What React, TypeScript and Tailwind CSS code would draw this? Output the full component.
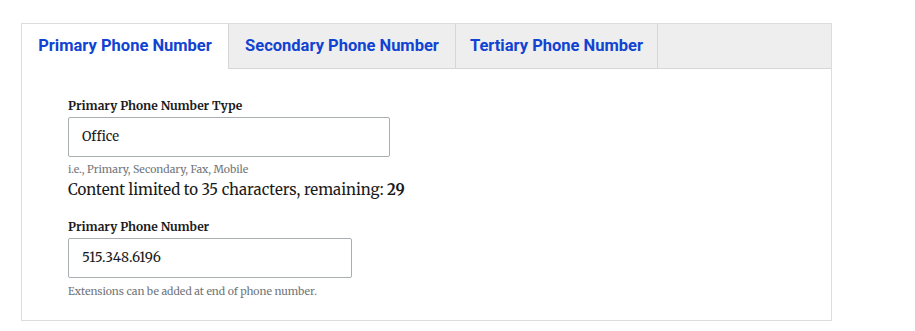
const serif = "font-['Merriweather','DejaVu_Serif',serif]"

const tabs = ['Primary Phone Number', 'Secondary Phone Number', 'Tertiary Phone Number']

export default function App() {
  return (
    <div className="h-[331px] w-[915px] overflow-hidden bg-white">
      <div className="h-[23px]" />
      <div className="ml-[21px] w-[811px] border border-[#dcdcdc]">
        {/* tab strip */}
        <div className="flex h-[45px] bg-[#eeeeee]">
          {tabs.map((t, i) => (
            <div
              key={t}
              className={
                i === 0
                  ? "flex w-[206px] items-center justify-center bg-white font-['Roboto',sans-serif] text-[16.5px] font-bold text-[#1143d2]"
                  : i === 1
                    ? "flex w-[227px] items-center justify-center border-b border-l border-[#d6d6d6] font-['Roboto',sans-serif] text-[16.5px] font-bold text-[#1143d2]"
                    : "flex w-[203px] items-center justify-center border-b border-x border-[#d6d6d6] font-['Roboto',sans-serif] text-[16.5px] font-bold text-[#1143d2]"
              }
            >
              {t}
            </div>
          ))}
          <div className="flex-1 border-b border-[#d6d6d6]" />
        </div>

        {/* panel */}
        <div className={`px-[46px] pt-[29px] pb-[22px] text-[#1b1b1b] ${serif}`}>
          <label className="block text-[12px] font-bold leading-[16px]">Primary Phone Number Type</label>
          <div className="mt-[3px] flex h-[40px] w-[322px] items-center rounded-[2px] border border-[#a9aeb1] px-[13px] text-[13px]">
            Office
          </div>
          <p className="mt-[6px] text-[10.5px] leading-[13px] text-[#71767a]">i.e., Primary, Secondary, Fax, Mobile</p>
          <p className="mt-[4px] text-[15px] leading-[20px] text-[#1b1b1b]">
            Content limited to 35 characters, remaining: <b>29</b>
          </p>

          <label className="mt-[19px] block text-[12px] font-bold leading-[16px]">Primary Phone Number</label>
          <div className="mt-[3px] flex h-[40px] w-[284px] items-center rounded-[2px] border border-[#a9aeb1] px-[13px] text-[13.5px]">
            515.348.6196
          </div>
          <p className="mt-[7px] text-[10.5px] leading-[13px] text-[#71767a]">Extensions can be added at end of phone number.</p>
        </div>
      </div>
    </div>
  )
}
